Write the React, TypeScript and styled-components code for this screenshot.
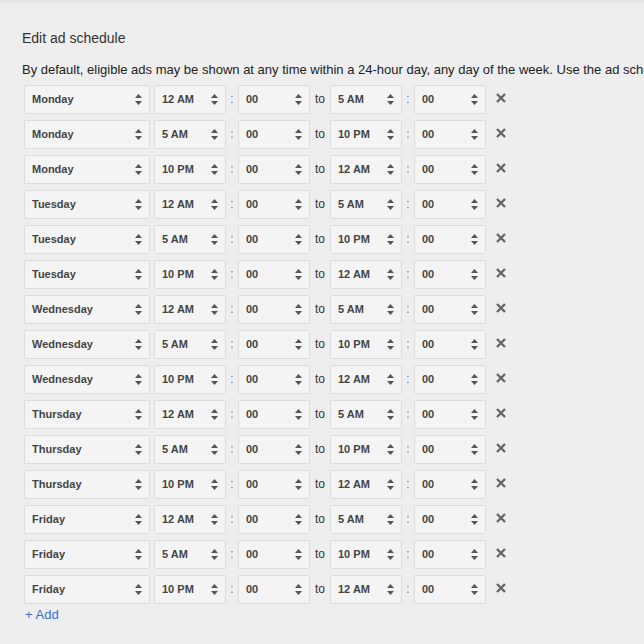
import React from "react";
import styled, { createGlobalStyle } from "styled-components";

const Global = createGlobalStyle`
  html, body { margin: 0; padding: 0; overflow: hidden; }
  body {
    background: linear-gradient(#e2e2e2 0px, #ececec 4px, #eeeeee 8px);
    background-color: #eeeeee;
    font-family: "Liberation Sans", Arial, sans-serif;
    color: #333;
    min-height: 644px;
  }
`;

const Page = styled.div`
  padding: 29px 0 0 22px;
  width: 622px;
  overflow: hidden;
`;

const Title = styled.h2`
  margin: 0;
  font-size: 14px;
  line-height: 18px;
  font-weight: normal;
  color: #333;
`;

const Description = styled.p`
  margin: 14px 0 6px 0;
  font-size: 13px;
  line-height: 18px;
  color: #222;
  white-space: nowrap;
`;

const Rows = styled.div`
  display: flex;
  flex-direction: column;
  gap: 6px;
  padding-left: 2px;
`;

const Row = styled.div`
  display: flex;
  align-items: center;
  height: 29px;
`;

const Select = styled.div<{ $w: number }>`
  box-sizing: border-box;
  width: ${(p) => p.$w}px;
  height: 29px;
  display: flex;
  align-items: center;
  justify-content: space-between;
  padding: 0 7px 1px 7px;
  background: #f4f4f4;
  border: 1px solid #dcdcdc;
  border-radius: 2px;
  font-size: 11px;
  font-weight: bold;
  color: #444;
`;

const Label = styled.span`
  line-height: 13px;
`;

const Sep = styled.span<{ $w: number }>`
  width: ${(p) => p.$w}px;
  text-align: center;
  font-size: 12px;
  line-height: 14px;
  padding-bottom: 1px;
  color: #777;
`;

const To = styled(Sep)`
  color: #333;
`;

const Gap = styled.span`
  width: 4px;
`;

const Remove = styled.button`
  margin-left: 10px;
  padding: 0;
  width: 10px;
  height: 10px;
  border: none;
  background: none;
  display: flex;
  margin-top: -3px;
`;

const AddLink = styled.a`
  display: inline-block;
  margin: 2px 0 0 3px;
  font-size: 13px;
  line-height: 18px;
  color: #3d6fd9;
  text-decoration: none;
`;

const Arrows = () => (
  <svg width="7" height="11" viewBox="0 0 7 11">
    <path d="M3.5 0 L7 4 L0 4 Z" fill="#555" />
    <path d="M0 7 L7 7 L3.5 11 Z" fill="#555" />
  </svg>
);

const XIcon = () => (
  <svg width="10" height="10" viewBox="0 0 10 10">
    <path d="M1 1 L9 9 M9 1 L1 9" stroke="#666" strokeWidth="2.4" />
  </svg>
);

const Box = ({ w, value }: { w: number; value: string }) => (
  <Select $w={w}>
    <Label>{value}</Label>
    <Arrows />
  </Select>
);

const days = ["Monday", "Tuesday", "Wednesday", "Thursday", "Friday"];
const spans: [string, string][] = [
  ["12 AM", "5 AM"],
  ["5 AM", "10 PM"],
  ["10 PM", "12 AM"],
];

export default function App() {
  const rows = days.flatMap((d) => spans.map(([a, b]) => ({ d, a, b })));
  return (
    <>
      <Global />
      <Page>
        <Title>Edit ad schedule</Title>
        <Description>
          By default, eligible ads may be shown at any time within a 24-hour day, any day of the week. Use the ad schedule to choose specific days and hours.
        </Description>
        <Rows>
          {rows.map((r, i) => (
            <Row key={i}>
              <Box w={126} value={r.d} />
              <Gap />
              <Box w={72} value={r.a} />
              <Sep $w={12}>:</Sep>
              <Box w={72} value="00" />
              <To $w={20}>to</To>
              <Box w={72} value={r.b} />
              <Sep $w={12}>:</Sep>
              <Box w={72} value="00" />
              <Remove aria-label="Remove">
                <XIcon />
              </Remove>
            </Row>
          ))}
        </Rows>
        <AddLink href="#">+ Add</AddLink>
      </Page>
    </>
  );
}
